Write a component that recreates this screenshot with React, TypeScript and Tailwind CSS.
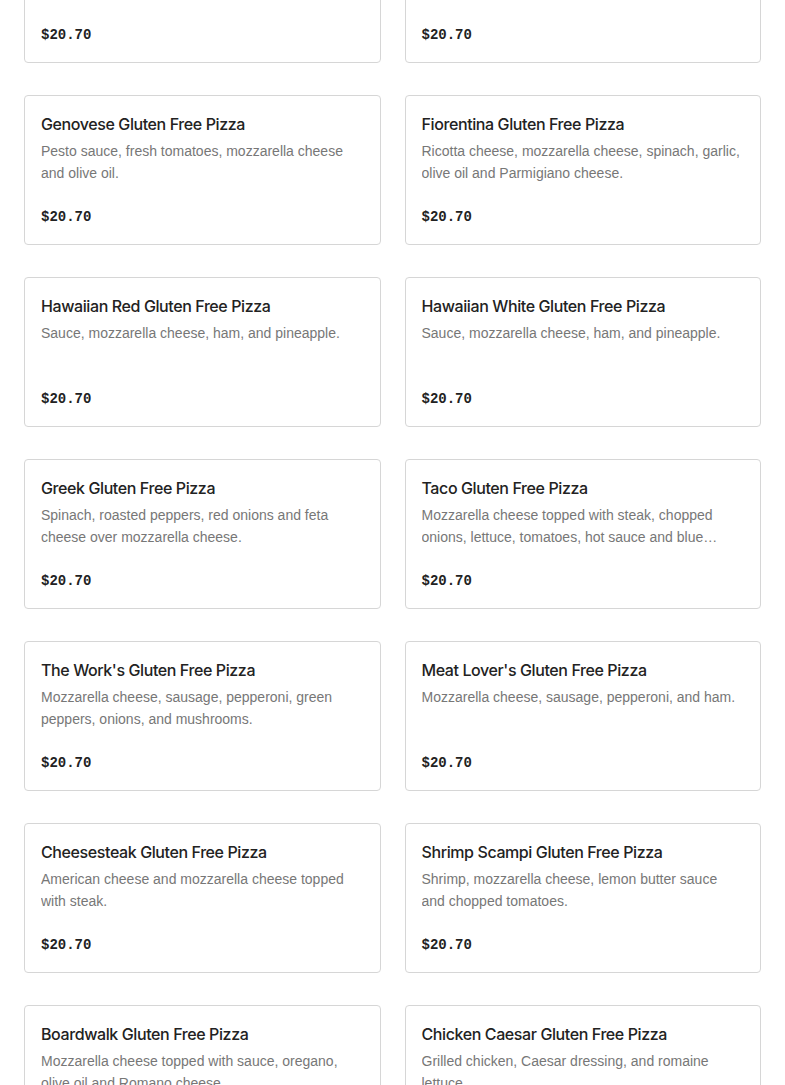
const items = [
  { name: 'Plain Gluten Free Pizza', desc: 'Sauce and mozzarella cheese.' },
  { name: 'White Gluten Free Pizza', desc: 'Ricotta cheese, mozzarella cheese, garlic and olive oil.' },
  { name: 'Genovese Gluten Free Pizza', desc: 'Pesto sauce, fresh tomatoes, mozzarella cheese and olive oil.' },
  { name: 'Fiorentina Gluten Free Pizza', desc: 'Ricotta cheese, mozzarella cheese, spinach, garlic, olive oil and Parmigiano cheese.' },
  { name: 'Hawaiian Red Gluten Free Pizza', desc: 'Sauce, mozzarella cheese, ham, and pineapple.' },
  { name: 'Hawaiian White Gluten Free Pizza', desc: 'Sauce, mozzarella cheese, ham, and pineapple.' },
  { name: 'Greek Gluten Free Pizza', desc: 'Spinach, roasted peppers, red onions and feta cheese over mozzarella cheese.' },
  { name: 'Taco Gluten Free Pizza', desc: 'Mozzarella cheese topped with steak, chopped onions, lettuce, tomatoes, hot sauce and blue cheese dressing.' },
  { name: "The Work's Gluten Free Pizza", desc: 'Mozzarella cheese, sausage, pepperoni, green peppers, onions, and mushrooms.' },
  { name: "Meat Lover's Gluten Free Pizza", desc: 'Mozzarella cheese, sausage, pepperoni, and ham.' },
  { name: 'Cheesesteak Gluten Free Pizza', desc: 'American cheese and mozzarella cheese topped with steak.' },
  { name: 'Shrimp Scampi Gluten Free Pizza', desc: 'Shrimp, mozzarella cheese, lemon butter sauce and chopped tomatoes.' },
  { name: 'Boardwalk Gluten Free Pizza', desc: 'Mozzarella cheese topped with sauce, oregano, olive oil and Romano cheese.' },
  { name: 'Chicken Caesar Gluten Free Pizza', desc: 'Grilled chicken, Caesar dressing, and romaine lettuce.' },
]

function MenuCard({ name, desc }: { name: string; desc: string }) {
  return (
    <div className="h-[150px] rounded border border-[#d6d6d6] bg-white px-4 pt-4 pb-[17px] flex flex-col">
      <h3 className="font-['Inter',sans-serif] text-[16px] leading-6 font-medium text-[#222] tracking-[-0.4px]">
        {name}
      </h3>
      <p className="mt-1 h-[44px] font-['Liberation_Sans',sans-serif] text-[14px] leading-[22px] text-[#777] line-clamp-2">
        {desc}
      </p>
      <div className="mt-[23px] font-['Liberation_Mono',monospace] text-[14px] leading-5 font-bold text-[#222]">
        $20.70
      </div>
    </div>
  )
}

export default function App() {
  return (
    <div className="h-[1085px] overflow-hidden bg-white">
      <div className="-mt-[87px] px-6 grid grid-cols-2 gap-x-6 gap-y-8">
        {items.map(item => (
          <MenuCard key={item.name} {...item} />
        ))}
      </div>
    </div>
  )
}
